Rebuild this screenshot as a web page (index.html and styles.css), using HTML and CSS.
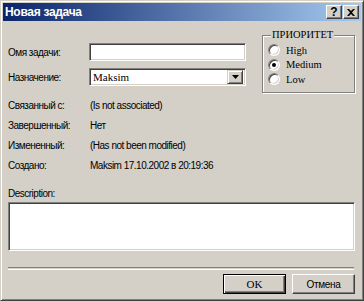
FILE: index.html
```html
<!DOCTYPE html>
<html lang="ru">
<head>
    <meta charset="UTF-8">
    <title>Новая задача</title>
    <link rel="stylesheet" href="styles.css">
</head>
<body>
    <div class="window">
        <div class="titlebar">
            <span class="title">Новая задача</span>
            <div class="caption-buttons">
                <button class="cap-btn help">?</button>
                <button class="cap-btn close">
                    <svg width="8" height="7" viewBox="0 0 8 7"><path d="M0 0h2l2 2 2-2h2L5 3.5 8 7H6L4 5 2 7H0l3-3.5z" fill="#000"/></svg>
                </button>
            </div>
        </div>

        <div class="body">
            <div class="top">
                <div class="fields">
                    <div class="row first">
                        <span class="label">Омя задачи:</span>
                        <div class="field"></div>
                    </div>
                    <div class="row">
                        <span class="label">Назначение:</span>
                        <div class="field select">
                            <span class="select-text">Maksim</span>
                            <span class="arrow-btn">
                                <svg width="7" height="4" viewBox="0 0 7 4"><path d="M0 0h7L3.5 4z" fill="#000"/></svg>
                            </span>
                        </div>
                    </div>
                </div>

                <fieldset class="priority">
                    <legend>ПРИОРИТЕТ</legend>
                    <div class="radio-row"><span class="radio"></span>High</div>
                    <div class="radio-row"><span class="radio checked"></span>Medium</div>
                    <div class="radio-row"><span class="radio"></span>Low</div>
                </fieldset>
            </div>

            <div class="info">
                <div class="info-row"><span class="label">Связанный с:</span><span>(Is not associated)</span></div>
                <div class="info-row"><span class="label">Завершенный:</span><span>Нет</span></div>
                <div class="info-row"><span class="label">Измененный:</span><span>(Has not been modified)</span></div>
                <div class="info-row"><span class="label">Создано:</span><span>Maksim 17.10.2002 в 20:19:36</span></div>
            </div>

            <div class="desc-label">Description:</div>
            <div class="field desc"></div>

            <div class="separator"></div>

            <div class="buttons">
                <button class="btn default">OK</button>
                <button class="btn">Отмена</button>
            </div>
        </div>
    </div>
</body>
</html>
```

FILE: styles.css
```css
body {
    margin: 0;
    background: #d4d0c8;
    font-family: "Liberation Sans", Arial, sans-serif;
    font-size: 10px;
    letter-spacing: -0.5px;
    color: #000;
}
.window {
    width: 364px;
    height: 301px;
    box-sizing: border-box;
    background: #d4d0c8;
    border: 1px solid;
    border-color: #d4d0c8 #404040 #404040 #d4d0c8;
    box-shadow: inset 1px 1px #fff, inset -1px -1px #808080;
    padding: 2px;
    display: flex;
    flex-direction: column;
}
.titlebar {
    height: 18px;
    background: linear-gradient(to right, #0a246a, #a6caf0);
    display: flex;
    align-items: center;
    padding: 0 2px 0 2px;
}
.title {
    color: #fff;
    font-weight: bold;
    font-size: 12px;
    letter-spacing: -0.3px;
}
.caption-buttons {
    margin-left: auto;
    display: flex;
    gap: 1px;
}
.cap-btn {
    width: 16px;
    height: 14px;
    padding: 0;
    box-sizing: border-box;
    background: #d4d0c8;
    border: 1px solid;
    border-color: #fff #404040 #404040 #fff;
    box-shadow: inset -1px -1px #808080;
    display: flex;
    align-items: center;
    justify-content: center;
    font-family: "Liberation Sans", Arial, sans-serif;
    font-weight: bold;
    font-size: 12px;
    letter-spacing: 0;
    line-height: 1;
}
.body {
    flex: 1;
    padding: 0 6px 0 5px;
    display: flex;
    flex-direction: column;
}
.top {
    display: flex;
    align-items: flex-start;
    margin-top: 8px;
}
.fields {
    width: 238px;
    padding-top: 14px;
}
.row {
    display: flex;
    align-items: center;
    height: 18px;
}
.row.first {
    margin-bottom: 7px;
}
.label {
    width: 81px;
    flex-shrink: 0;
}
.field {
    background: #fff;
    box-sizing: border-box;
    border: 1px solid;
    border-color: #808080 #fff #fff #808080;
    box-shadow: inset 1px 1px #404040, inset -1px -1px #d4d0c8;
}
.row .field {
    width: 157px;
    height: 18px;
}
.select {
    display: flex;
    align-items: center;
    padding: 2px;
}
.select-text {
    font-family: "Liberation Serif", "Times New Roman", serif;
    font-size: 11px;
    letter-spacing: 0;
    padding-left: 1px;
}
.arrow-btn {
    margin-left: auto;
    width: 16px;
    height: 14px;
    box-sizing: border-box;
    background: #d4d0c8;
    border: 1px solid;
    border-color: #d4d0c8 #404040 #404040 #d4d0c8;
    box-shadow: inset 1px 1px #fff, inset -1px -1px #808080;
    display: flex;
    align-items: center;
    justify-content: center;
}
.priority {
    margin: 0 0 0 16px;
    width: 93px;
    height: 64px;
    box-sizing: border-box;
    padding: 2px 0 0 5px;
    border: 1px solid #808080;
    box-shadow: inset 1px 1px #fff, 1px 1px #fff;
    font-family: "Liberation Serif", "Times New Roman", serif;
    font-size: 10.5px;
    letter-spacing: 0;
}
.priority legend {
    padding: 0 1px;
    margin-left: 3px;
    line-height: 12px;
    background: #d4d0c8;
    font-size: 10.5px;
}
.radio-row {
    display: flex;
    align-items: center;
    height: 14.5px;
    gap: 6px;
}
.radio {
    width: 12px;
    height: 12px;
    box-sizing: border-box;
    border-radius: 50%;
    background: #fff;
    border: 1px solid;
    border-color: #808080 #fff #fff #808080;
    box-shadow: inset 1px 1px #404040, inset -1px -1px #d4d0c8;
    display: flex;
    align-items: center;
    justify-content: center;
}
.radio.checked::after {
    content: "";
    width: 4px;
    height: 4px;
    border-radius: 50%;
    background: #000;
}
.info {
    margin-top: 2px;
}
.info-row {
    display: flex;
    align-items: center;
    height: 20px;
}
.info-row .label {
    width: 82px;
}
.desc-label {
    margin-top: 13px;
    line-height: 12px;
}
.desc {
    margin-top: 2px;
    height: 49px;
}
.separator {
    margin-top: 16px;
    height: 1px;
    border-top: 1px solid #808080;
    border-bottom: 1px solid #fff;
    margin-right: 1px;
}
.buttons {
    display: flex;
    justify-content: flex-end;
    gap: 6px;
    margin-top: 4px;
}
.btn {
    width: 63px;
    height: 20px;
    box-sizing: border-box;
    background: #d4d0c8;
    border: 1px solid;
    border-color: #fff #404040 #404040 #fff;
    box-shadow: inset -1px -1px #808080;
    font-family: "Liberation Sans", Arial, sans-serif;
    font-size: 10px;
    letter-spacing: -0.3px;
    padding: 0;
}
.btn.default {
    border: 1px solid #000;
    box-shadow: inset 1px 1px #fff, inset -1px -1px #404040, inset -2px -2px #808080;
    font-family: "Liberation Serif", "Times New Roman", serif;
    font-size: 11px;
    letter-spacing: 0;
}
```
